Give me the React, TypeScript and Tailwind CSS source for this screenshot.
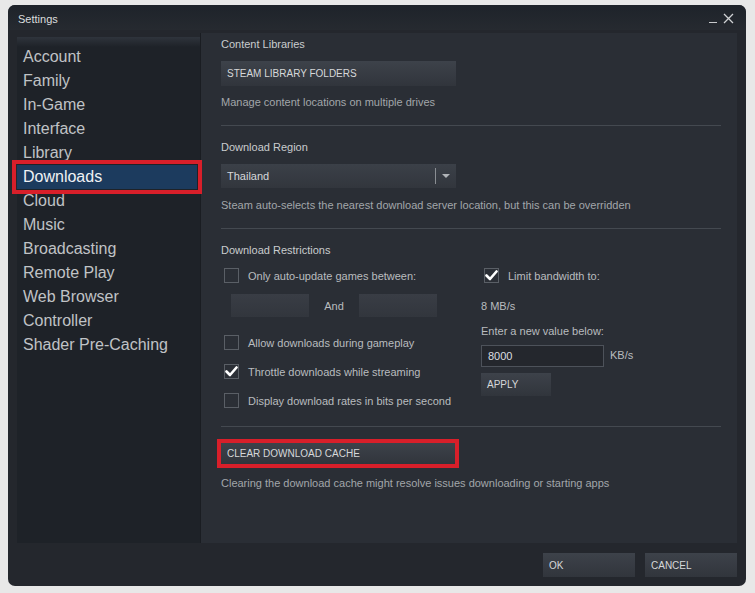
import React from "react";

const font = { fontFamily: '"Liberation Sans", Arial, sans-serif' };

function Check({ checked }: { checked?: boolean }) {
  return (
    <div className="w-[15px] h-[15px] border border-[#5a5f66] bg-[#2b2f36] flex items-center justify-center shrink-0">
      {checked && (
        <svg width="13" height="11" viewBox="0 0 13 11">
          <path d="M1.5 5.5 L5 9 L11.5 1.5" stroke="#ffffff" strokeWidth="2.6" fill="none" strokeLinecap="round" strokeLinejoin="round" />
        </svg>
      )}
    </div>
  );
}

function Btn({ children, className = "" }: { children: React.ReactNode; className?: string }) {
  return (
    <div
      className={
        "bg-gradient-to-b from-[#3d424a] to-[#31353c] text-[#d6d8da] text-[10px] leading-[13px] uppercase flex items-center pl-[6px] " +
        className
      }
    >
      {children}
    </div>
  );
}

export default function App() {
  const nav = [
    "Account",
    "Family",
    "In-Game",
    "Interface",
    "Library",
    "Downloads",
    "Cloud",
    "Music",
    "Broadcasting",
    "Remote Play",
    "Web Browser",
    "Controller",
    "Shader Pre-Caching",
  ];
  return (
    <div className="w-[755px] h-[593px] bg-[#e8e8e8] pt-[5px] pl-[8px]" style={font}>
      <div className="w-[738px] h-[581px] rounded-[7px] bg-[#24272d] flex flex-col overflow-hidden">
        {/* title bar */}
        <div className="h-[25px] flex items-center justify-between pl-[10px] pr-[12px] bg-gradient-to-b from-[#1e232a] to-[#262a30]">
          <span className="text-[11px] text-[#dcdedf] mt-[3px]">Settings</span>
          <div className="flex items-end gap-[6px] text-[#c8cacc] mt-[2px]">
            <div className="w-[8px] h-[1.5px] bg-[#c8cacc] mb-[1px]" />
            <svg width="11" height="11" viewBox="0 0 11 11">
              <path d="M1 1 L10 10 M10 1 L1 10" stroke="#d0d2d4" strokeWidth="1.3" />
            </svg>
          </div>
        </div>
        {/* body */}
        <div className="flex h-[513px]">
          <div className="w-[9px]" />
          <div className="w-[183px] mt-[7px] bg-[#1e2228] relative">
            <div className="absolute left-0 right-0 top-0 h-[10px] bg-gradient-to-b from-[#2f343c] to-[#1e2228]" />
            <div className="relative pt-[8px]">
              {nav.map((n) =>
                n === "Downloads" ? (
                  <div key={n} className="relative h-[24px]">
                    <div className="absolute left-[-5px] right-[-2px] top-[-5px] bottom-[-5px] border-[4px] border-[#d81f2a]" />
                    <div className="absolute left-0 right-[3px] top-0 bottom-0 bg-[#1c3b5e]" />
                    <div className="relative h-[24px] flex items-center pl-[6px] text-[16px] text-[#f0f2f4]">{n}</div>
                  </div>
                ) : (
                  <div key={n} className="h-[24px] flex items-center pl-[6px] text-[16px] text-[#c0c3c6]">
                    {n}
                  </div>
                )
              )}
            </div>
          </div>
          {/* content */}
          <div className="w-[537px] mt-[3px] bg-[#2a2e35] border-l border-[#1a1d22] pl-[20px] pt-[4px] text-[11px] leading-[13px] text-[#b9bcbf]">
            <div className="h-[13px] pt-px text-[#c9ccce]">Content Libraries</div>
            <Btn className="w-[235px] h-[25px] mt-[11px]">Steam Library Folders</Btn>
            <div className="h-[13px] pt-px mt-[9px] text-[#a2a6aa]">Manage content locations on multiple drives</div>
            <div className="h-px bg-[#444950] mt-[17px] mr-[16px]" />

            <div className="h-[13px] pt-px mt-[14px] text-[#c9ccce]">Download Region</div>
            <div className="w-[235px] h-[24px] mt-[11px] bg-gradient-to-b from-[#3b4048] to-[#32363d] flex items-center">
              <span className="pl-[6px] flex-1 text-[#d6d8da]">Thailand</span>
              <div className="w-px h-[16px] bg-[#8a8e93]" />
              <svg width="20" height="8" viewBox="0 0 20 8">
                <path d="M6 2 L14 2 L10 6 Z" fill="#b0b4b8" />
              </svg>
            </div>
            <div className="h-[13px] pt-px mt-[10px] text-[#a2a6aa]">
              Steam auto-selects the nearest download server location, but this can be overridden
            </div>
            <div className="h-px bg-[#444950] mt-[17px] mr-[16px]" />

            <div className="h-[13px] pt-px mt-[14px] text-[#c9ccce]">Download Restrictions</div>
            <div className="flex mt-[12px]">
              <div className="w-[260px]">
                <div className="flex items-center pl-[3px] h-[15px]">
                  <Check />
                  <span className="ml-[9px] pt-px">Only auto-update games between:</span>
                </div>
                <div className="flex items-center mt-[11px] pl-[10px]">
                  <div className="w-[78px] h-[23px] bg-gradient-to-b from-[#393d45] to-[#32363d]" />
                  <span className="w-[50px] text-center pt-px">And</span>
                  <div className="w-[78px] h-[23px] bg-gradient-to-b from-[#393d45] to-[#32363d]" />
                </div>
                <div className="flex items-center pl-[3px] h-[15px] mt-[18px]">
                  <Check />
                  <span className="ml-[9px] pt-px">Allow downloads during gameplay</span>
                </div>
                <div className="flex items-center pl-[3px] h-[15px] mt-[14px]">
                  <Check checked />
                  <span className="ml-[9px] pt-px">Throttle downloads while streaming</span>
                </div>
                <div className="flex items-center pl-[3px] h-[15px] mt-[14px]">
                  <Check />
                  <span className="ml-[9px] pt-px">Display download rates in bits per second</span>
                </div>
              </div>
              <div>
                <div className="flex items-center pl-[3px] h-[15px]">
                  <Check checked />
                  <span className="ml-[9px] pt-px">Limit bandwidth to:</span>
                </div>
                <div className="h-[13px] pt-px mt-[16px]">8 MB/s</div>
                <div className="h-[13px] pt-px mt-[12px]">Enter a new value below:</div>
                <div className="flex items-center mt-[8px]">
                  <div className="w-[123px] h-[22px] border border-[#4d525a] bg-[#24272d] flex items-center pl-[6px] text-[#dcdee0]">
                    8000
                  </div>
                  <span className="ml-[6px] -mt-px">KB/s</span>
                </div>
                <Btn className="w-[70px] h-[23px] mt-[6px]">Apply</Btn>
              </div>
            </div>
            <div className="h-px bg-[#444950] mt-[18px] mr-[16px]" />

            <div className="relative w-[234px] h-[21px] mt-[16px]">
              <div className="absolute left-[-4px] right-[-4px] top-[-4px] bottom-[-4px] border-[4px] border-[#d81f2a]" />
              <Btn className="w-[234px] h-[21px]">Clear Download Cache</Btn>
            </div>
            <div className="h-[13px] pt-px mt-[12px] text-[#a2a6aa]">
              Clearing the download cache might resolve issues downloading or starting apps
            </div>
          </div>
        </div>
        {/* footer */}
        <div className="flex-1 flex justify-end items-start pt-[10px] pr-[9px] gap-[10px]">
          <Btn className="w-[92px] h-[24px]">OK</Btn>
          <Btn className="w-[92px] h-[24px]">Cancel</Btn>
        </div>
      </div>
    </div>
  );
}
